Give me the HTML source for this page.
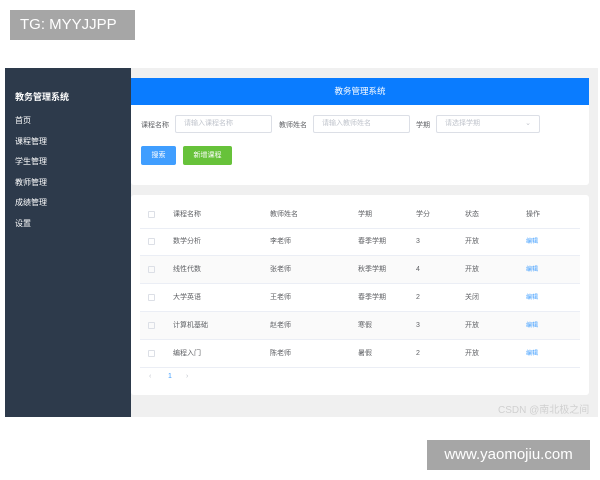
<!DOCTYPE html>
<html><head><meta charset="utf-8"><style>
*{margin:0;padding:0;box-sizing:border-box}
body{width:600px;height:480px;background:#fff;position:relative;overflow:hidden;font-family:"Liberation Sans","Noto Sans CJK SC",sans-serif;font-size:8px;color:#606266}
.a{position:absolute}
.tg{left:10px;top:10px;width:125px;height:30px;background:#a6a6a6;color:#fff;font-size:15px;line-height:30px;padding-left:10px}
.ww{left:427px;top:440px;width:163px;height:30px;background:#a6a6a6;color:#fff;font-size:15px;line-height:30px;text-align:center}
.app{left:5px;top:68px;width:593px;height:349px;background:#f0f0f0}
.side{left:5px;top:68px;width:126px;height:349px;background:#2d3a4b;color:#fff}
.side .t{position:absolute;left:10px;top:22px;font-size:9px;font-weight:bold}
.side .m{position:absolute;left:10px;font-size:8px}
.hd{left:131px;top:78px;width:458px;height:27px;background:#0a7cff;color:#fff;text-align:center;line-height:27px;font-size:8.5px}
.card{background:#fff;border-radius:3px}
.inp{position:absolute;height:18px;border:1px solid #dcdfe6;border-radius:2px;color:#c0c4cc;font-size:7px;line-height:16px;padding-left:8px;background:#fff}
.btn{position:absolute;height:19px;border-radius:2px;color:#fff;font-size:7px;line-height:19px;text-align:center}
.row{position:absolute;left:140px;width:440px;height:28px;border-bottom:1px solid #ebeef5}
.row span{position:absolute;top:9px;font-size:7px;line-height:10px}
.cb{position:absolute;left:8px;top:10px;width:7px;height:7px;border:1px solid #dcdfe6;border-radius:1px}
</style></head><body>
<div class="a tg">TG: MYYJJPP</div>
<div class="a app"></div>
<div class="a side"><div class="t">教务管理系统</div>
<div class="m" style="top:47px">首页</div><div class="m" style="top:68px">课程管理</div><div class="m" style="top:88px">学生管理</div><div class="m" style="top:109px">教师管理</div><div class="m" style="top:129px">成绩管理</div><div class="m" style="top:150px">设置</div></div>
<div class="a hd">教务管理系统</div>
<div class="a card" style="left:131px;top:105px;width:458px;height:80px;border-radius:0 0 3px 3px"></div>
<span class="a" style="left:141px;top:120px;font-size:7px">课程名称</span>
<div class="inp" style="left:175px;top:115px;width:97px">请输入课程名称</div>
<span class="a" style="left:279px;top:120px;font-size:7px">教师姓名</span>
<div class="inp" style="left:313px;top:115px;width:97px">请输入教师姓名</div>
<span class="a" style="left:416px;top:120px;font-size:7px">学期</span>
<div class="inp" style="left:436px;top:115px;width:104px">请选择学期<span style="position:absolute;right:8px">⌄</span></div>
<div class="btn" style="left:141px;top:146px;width:35px;background:#409eff">搜索</div>
<div class="btn" style="left:183px;top:146px;width:49px;background:#67c23a">新增课程</div>
<div class="a card" style="left:131px;top:195px;width:458px;height:200px"></div>
<div class="row" style="top:201px"><div class="cb"></div><span style="left:33px">课程名称</span><span style="left:130px">教师姓名</span><span style="left:218px">学期</span><span style="left:276px">学分</span><span style="left:325px">状态</span><span style="left:386px">操作</span></div>
<div class="row" style="top:228px"><div class="cb"></div><span style="left:33px">数学分析</span><span style="left:130px">李老师</span><span style="left:218px">春季学期</span><span style="left:276px">3</span><span style="left:325px">开放</span><span style="left:386px;color:#409eff;font-size:6px">编辑</span></div>
<div class="row" style="top:256px;background:#fafafa"><div class="cb"></div><span style="left:33px">线性代数</span><span style="left:130px">张老师</span><span style="left:218px">秋季学期</span><span style="left:276px">4</span><span style="left:325px">开放</span><span style="left:386px;color:#409eff;font-size:6px">编辑</span></div>
<div class="row" style="top:284px"><div class="cb"></div><span style="left:33px">大学英语</span><span style="left:130px">王老师</span><span style="left:218px">春季学期</span><span style="left:276px">2</span><span style="left:325px">关闭</span><span style="left:386px;color:#409eff;font-size:6px">编辑</span></div>
<div class="row" style="top:312px;background:#fafafa"><div class="cb"></div><span style="left:33px">计算机基础</span><span style="left:130px">赵老师</span><span style="left:218px">寒假</span><span style="left:276px">3</span><span style="left:325px">开放</span><span style="left:386px;color:#409eff;font-size:6px">编辑</span></div>
<div class="row" style="top:340px"><div class="cb"></div><span style="left:33px">编程入门</span><span style="left:130px">陈老师</span><span style="left:218px">暑假</span><span style="left:276px">2</span><span style="left:325px">开放</span><span style="left:386px;color:#409eff;font-size:6px">编辑</span></div>
<span class="a" style="left:149px;top:373px;color:#c0c4cc;font-size:7px">‹</span>
<span class="a" style="left:168px;top:373px;color:#409eff;font-size:7px">1</span>
<span class="a" style="left:186px;top:373px;color:#c0c4cc;font-size:7px">›</span>
<span class="a" style="left:498px;top:401px;color:#d0d0d0;font-size:10px">CSDN @南北极之间</span>
<div class="a ww">www.yaomojiu.com</div>
</body></html>
